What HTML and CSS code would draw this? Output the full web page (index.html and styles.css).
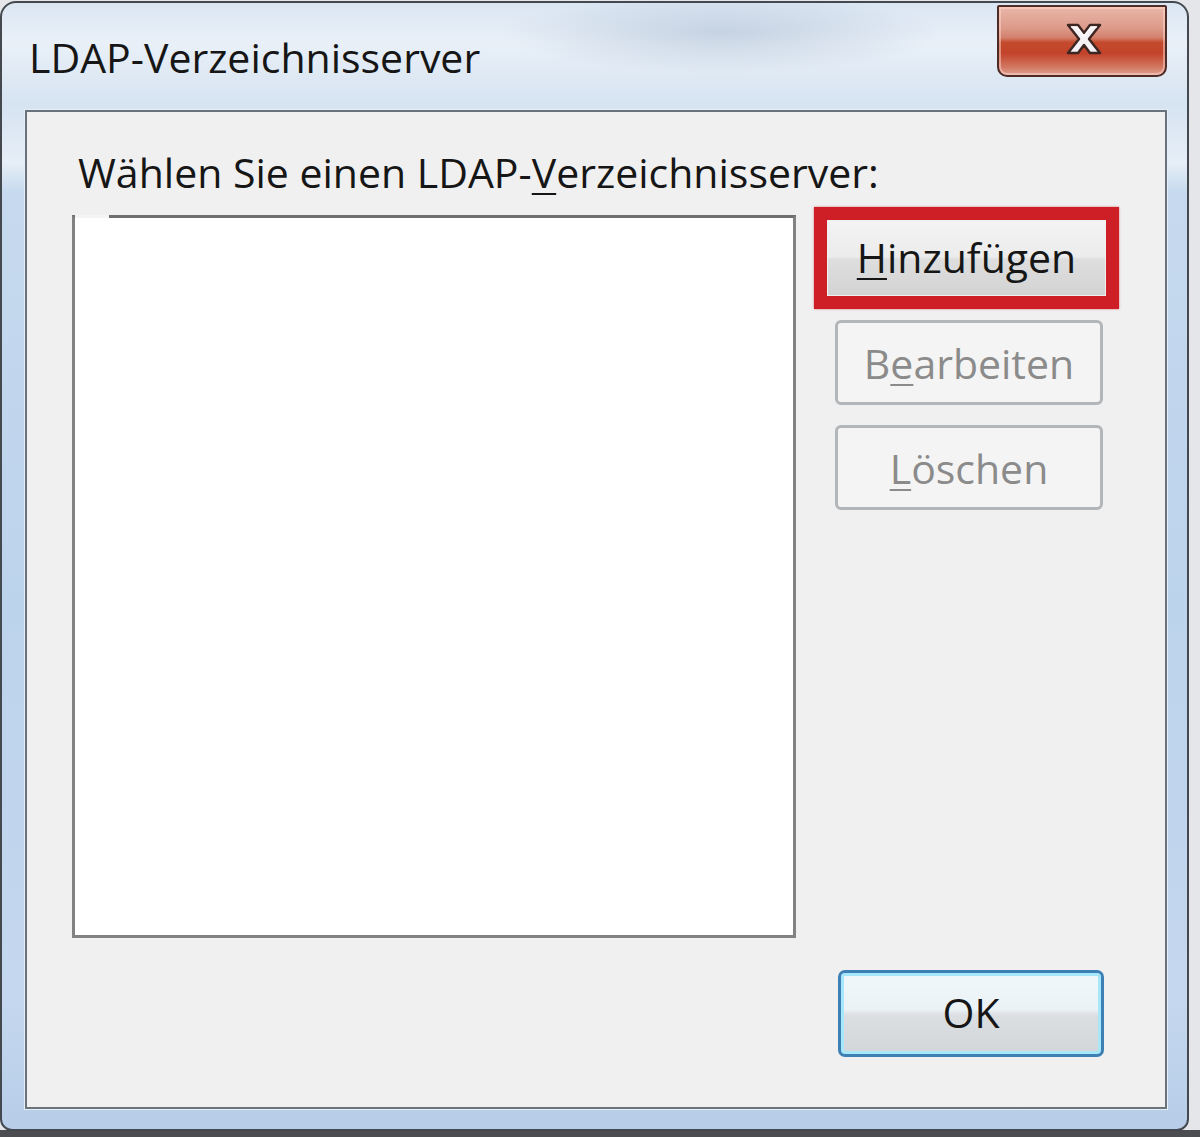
FILE: index.html
```html
<!DOCTYPE html>
<html lang="de">
<head>
<meta charset="utf-8">
<title>LDAP-Verzeichnisserver</title>
<link rel="stylesheet" href="styles.css">
</head>
<body>
<div class="window">
  <div class="titlebar">
    <div class="title">LDAP-Verzeichnisserver</div>
    <div class="close">
      <svg width="38" height="32" viewBox="0 0 38 32">
        <path d="M3 2 H13 L19 10 L25 2 H35 L24 16 L35 30 H25 L19 22 L13 30 H3 L14 16 Z" fill="#f4f2f4" stroke="#3e2623" stroke-width="2.5" stroke-linejoin="round"/>
        <path d="M6 4 H12 L19 13 L26 4 H32" fill="none" stroke="#ffffff" stroke-width="1.5" opacity="0.8"/>
      </svg>
    </div>
  </div>
  <div class="client">
    <div class="label">Wählen Sie einen LDAP-<u>V</u>erzeichnisserver:</div>
    <div class="row">
      <div class="listbox"><span class="lb-gap"></span></div>
      <div class="buttons">
        <div class="highlight">
          <div class="btn btn-active"><u>H</u>inzufügen</div>
        </div>
        <div class="btn btn-disabled btn-edit">B<u>e</u>arbeiten</div>
        <div class="btn btn-disabled btn-del"><u>L</u>öschen</div>
        <div class="btn btn-default">OK</div>
      </div>
    </div>
  </div>
</div>
</body>
</html>
```

FILE: styles.css
```css
html, body {
  margin: 0;
  padding: 0;
}

body {
  width: 1200px;
  height: 1137px;
  overflow: hidden;
  background: linear-gradient(to bottom, #e4e6e9 0, #e4e6e9 1130px, #4b4d50 1130px);
  font-family: "Open Sans", "Noto Sans", "DejaVu Sans", sans-serif;
  color: #161616;
}

.window {
  box-sizing: border-box;
  width: 1189px;
  height: 1130px;
  margin: 1px 0 0 0;
  border: 2px solid #44494f;
  border-radius: 16px 16px 12px 12px;
  background:
    radial-gradient(ellipse 220px 40px at 720px 30px, rgba(150,170,195,0.4), rgba(150,170,195,0) 100%),
    linear-gradient(to bottom, #dbe6f3 0, #e9f0f8 40px, #d6e3f1 100px, #e6eef7 160px, #c6d9ee 190px, #bcd3ec 600px, #c4d7ee 1000px, #b7cde8 100%);
  display: flex;
  flex-direction: column;
}

.titlebar {
  height: 107px;
  display: flex;
  justify-content: space-between;
  align-items: flex-start;
}

.title {
  font-size: 41px;
  line-height: 48px;
  padding: 30px 0 0 27px;
  color: #161616;
}

.close {
  box-sizing: border-box;
  width: 170px;
  height: 72px;
  margin: 2px 20px 0 0;
  border: 2px solid #4e2b25;
  border-radius: 2px 2px 10px 10px;
  background: linear-gradient(to bottom, #e9b6a8 0, #dd9c8b 30%, #d3816d 45%, #c44a2c 52%, #c2432a 68%, #d27760 88%, #dea092 100%);
  box-shadow: inset 0 0 0 2px rgba(255,215,205,0.5);
  display: flex;
  align-items: center;
  justify-content: center;
  padding: 0 0 0 4px;
}

.close svg {
  display: block;
  margin-top: -4px;
}

.client {
  flex: 1;
  margin: 0 20px 20px 23px;
  border: 2px solid #6a727c;
  background: #f0f0f0;
  box-shadow: 0 0 0 1px #e6eef8;
  padding: 0 0 0 45px;
  display: flex;
  flex-direction: column;
}

.label {
  font-size: 41px;
  line-height: 48px;
  padding: 36px 0 0 6px;
  color: #161616;
  white-space: nowrap;
}

u {
  text-decoration-thickness: 2px;
  text-underline-offset: 5px;
}

.row {
  display: flex;
  height: 850px;
  margin-top: 11px;
}

.listbox {
  box-sizing: border-box;
  width: 724px;
  height: 723px;
  margin-top: 8px;
  background: #ffffff;
  border: 3px solid #828282;
  border-top-color: #6e6e6e;
  position: relative;
}

.lb-gap {
  position: absolute;
  left: 0;
  top: -3px;
  width: 34px;
  height: 3px;
  background: #f4f4f4;
}

.buttons {
  display: flex;
  flex-direction: column;
  align-items: flex-start;
  margin-left: 18px;
}

.highlight {
  box-sizing: border-box;
  width: 305px;
  height: 102px;
  border: 13px solid #cf1f26;
  box-shadow: 0 0 2px rgba(200,30,40,0.6);
  background: #f0f0f0;
  padding: 1px;
}

.btn {
  box-sizing: border-box;
  display: flex;
  align-items: center;
  justify-content: center;
  font-size: 41px;
  line-height: 48px;
  white-space: nowrap;
}

.btn-active {
  width: 100%;
  height: 100%;
  background: linear-gradient(to bottom, #f3f3f3 0, #ececec 48%, #dedede 52%, #d3d3d3 100%);
  color: #161616;
  padding-bottom: 2px;
}

.btn-disabled {
  width: 268px;
  height: 85px;
  margin-left: 21px;
  border: 3px solid #b3b6b9;
  border-radius: 6px;
  background: #f4f4f4;
  color: #8b8b8b;
}

.btn-edit {
  margin-top: 11px;
}

.btn-del {
  margin-top: 20px;
}

.btn-default {
  width: 266px;
  height: 87px;
  margin-top: auto;
  margin-left: 24px;
  border: 3px solid #3d80b6;
  border-radius: 7px;
  box-shadow: inset 0 0 0 3px #a6e8f9;
  background: linear-gradient(to bottom, #f1f8fb 0, #eaf2f6 45%, #dcdfe1 52%, #d2d6d8 100%);
  color: #161616;
  padding-bottom: 4px;
}
```
